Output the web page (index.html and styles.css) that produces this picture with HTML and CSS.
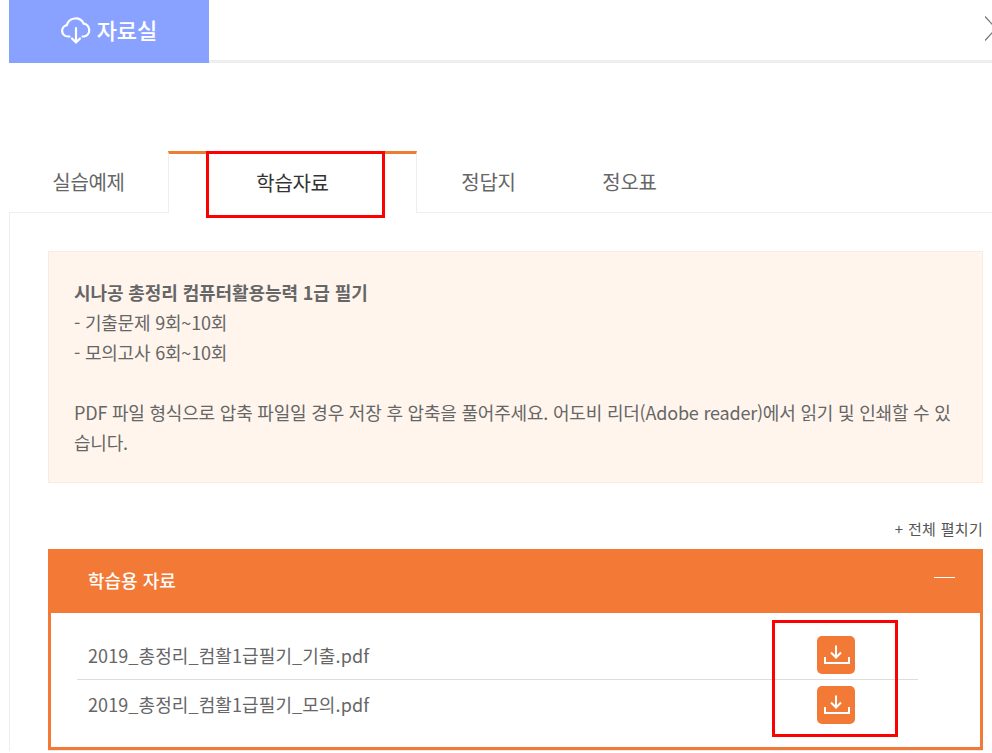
FILE: index.html
```html
<!DOCTYPE html>
<html lang="ko">
<head>
<meta charset="utf-8">
<title>자료실</title>
<link rel="stylesheet" href="styles.css">
</head>
<body>
<div class="page">
  <header class="top">
    <div class="title">
      <svg class="cloud" viewBox="0 0 30 30" width="30" height="30" fill="none" stroke="#fff" stroke-width="2.200" stroke-linecap="round" stroke-linejoin="round"><path d="M8.500 21.500H6.800A5.700 5.700 0 0 1 5.800 10.200 9 9 0 0 1 22.700 8.700 6.500 6.500 0 0 1 23 21.500H21.500"/><path d="M15 13V27M11 23.500L15 27.500L19 23.500"/></svg>
      <span>자료실</span>
    </div>
    <svg class="close" viewBox="0 0 7 25" width="7" height="25" fill="none" stroke="#777" stroke-width="1.300"><path d="M0 0.500L11 12.500L0 24.500"/></svg>
  </header>
  <nav class="tabs">
    <a class="tab first">실습예제</a>
    <a class="tab active">학습자료</a>
    <a class="tab third">정답지</a>
    <a class="tab third">정오표</a>
    <div class="tabfill"></div>
  </nav>
  <main class="panel">
    <section class="notice">
      <p><strong>시나공 총정리 컴퓨터활용능력 1급 필기</strong><br>- 기출문제 9회~10회<br>- 모의고사 6회~10회</p>
      <p class="gap">PDF 파일 형식으로 압축 파일일 경우 저장 후 압축을 풀어주세요. 어도비 리더(Adobe reader)에서 읽기 및 인쇄할 수 있습니다.</p>
    </section>
    <div class="expand">+ 전체 펼치기</div>
    <section class="acc">
      <div class="acc-head"><span>학습용 자료</span><i class="minus"></i></div>
      <ul class="files">
        <li class="file"><span>2019_총정리_컴활1급필기_기출.pdf</span><a class="dl"><svg viewBox="0 0 38 38" width="38" height="38" fill="none" stroke="#fff" stroke-width="2"><path d="M19 9.500V21.500M14 16.500L19 21.500L24 16.500"/><path d="M8 21V27H32V21"/></svg></a></li>
        <li class="file"><span>2019_총정리_컴활1급필기_모의.pdf</span><a class="dl"><svg viewBox="0 0 38 38" width="38" height="38" fill="none" stroke="#fff" stroke-width="2"><path d="M19 9.500V21.500M14 16.500L19 21.500L24 16.500"/><path d="M8 21V27H32V21"/></svg></a></li>
      </ul>
    </section>
    <div class="next"></div>
  </main>
</div>
<div class="mark mark-tab"></div>
<div class="mark mark-dl"></div>
</body>
</html>
```

FILE: styles.css
```css
* { box-sizing: border-box; }
html, body { margin: 0; padding: 0; height: 753px; overflow: hidden; background: #fff; }
body { font-family: "Noto Sans CJK KR", "Noto Sans", sans-serif; color: #666; font-size: 18px; }
.page { padding-left: 9px; height: 753px; }
.top { height: 63px; border-bottom: 3px solid #eee; display: flex; justify-content: space-between; align-items: flex-start; margin-bottom: 88px; }
.title { width: 200px; height: 63px; background: #8aa2ff; color: #fff; display: flex; align-items: center; justify-content: center; gap: 6px; font-size: 22px; font-weight: 500; padding-bottom: 6px; flex: none; }
.cloud { display: block; margin-top: 2px; }
.close { margin-top: 16px; display: block; }
.tabs { display: flex; height: 62px; }
.tab { display: flex; align-items: center; justify-content: center; height: 62px; border-bottom: 1px solid #eee; font-size: 20px; letter-spacing: -0.3px; }
.first { width: 159px; }
.active { width: 249px; border: 1px solid #eee; border-top: 3px solid #ed7d31; border-bottom: 0; color: #333; padding-bottom: 2px; }
.third { width: 141px; padding-left: 2px; }
.tabfill { flex: 1; border-bottom: 1px solid #eee; }
.panel { border-left: 1px solid #eee; padding: 38px 9px 0 38px; }
.notice { height: 232px; background: #fff5ed; border: 1px solid #faeadf; padding: 25px 25px 0; line-height: 30px; font-size: 18px; letter-spacing: -0.2px; word-break: break-all; }
.notice p { margin: 0; }
.notice .gap { margin-top: 30px; }
.notice strong { font-weight: 700; letter-spacing: -0.1px; }
.expand { text-align: right; font-size: 15px; color: #555; line-height: 20px; margin-top: 36px; margin-bottom: 10px; letter-spacing: 0.3px; }
.acc { border: 3px solid #f37a36; border-top: 0; height: 201px; }
.acc-head { height: 64px; margin: 0 -3px; background: #f37a36; color: #fff; display: flex; justify-content: space-between; align-items: center; padding: 0 28px 2px 40px; font-size: 18px; font-weight: 500; }
.minus { display: block; width: 21px; height: 1px; background: #fff; margin-top: -6px; }
.files { list-style: none; margin: 21px 0 0; padding: 0 62px 0 26px; }
.file { display: flex; justify-content: space-between; align-items: center; height: 44px; padding: 0 63px 0 11px; font-size: 18px; letter-spacing: 0.1px; }
.file:first-child { border-bottom: 1px solid #ddd; height: 46px; padding-bottom: 3px; }
.file:last-child { height: 50px; }
.file:last-child span { margin-bottom: 2px; }
.dl { width: 38px; height: 38px; border-radius: 5px; background: #f37a36; display: block; }
.dl svg { display: block; }
.next { height: 1px; background: #e8e8e8; }
.mark { position: absolute; border: 3px solid #f00; }
.mark-tab { left: 206px; top: 151px; width: 179px; height: 67px; }
.mark-dl { left: 772px; top: 620px; width: 126px; height: 117px; }
```
